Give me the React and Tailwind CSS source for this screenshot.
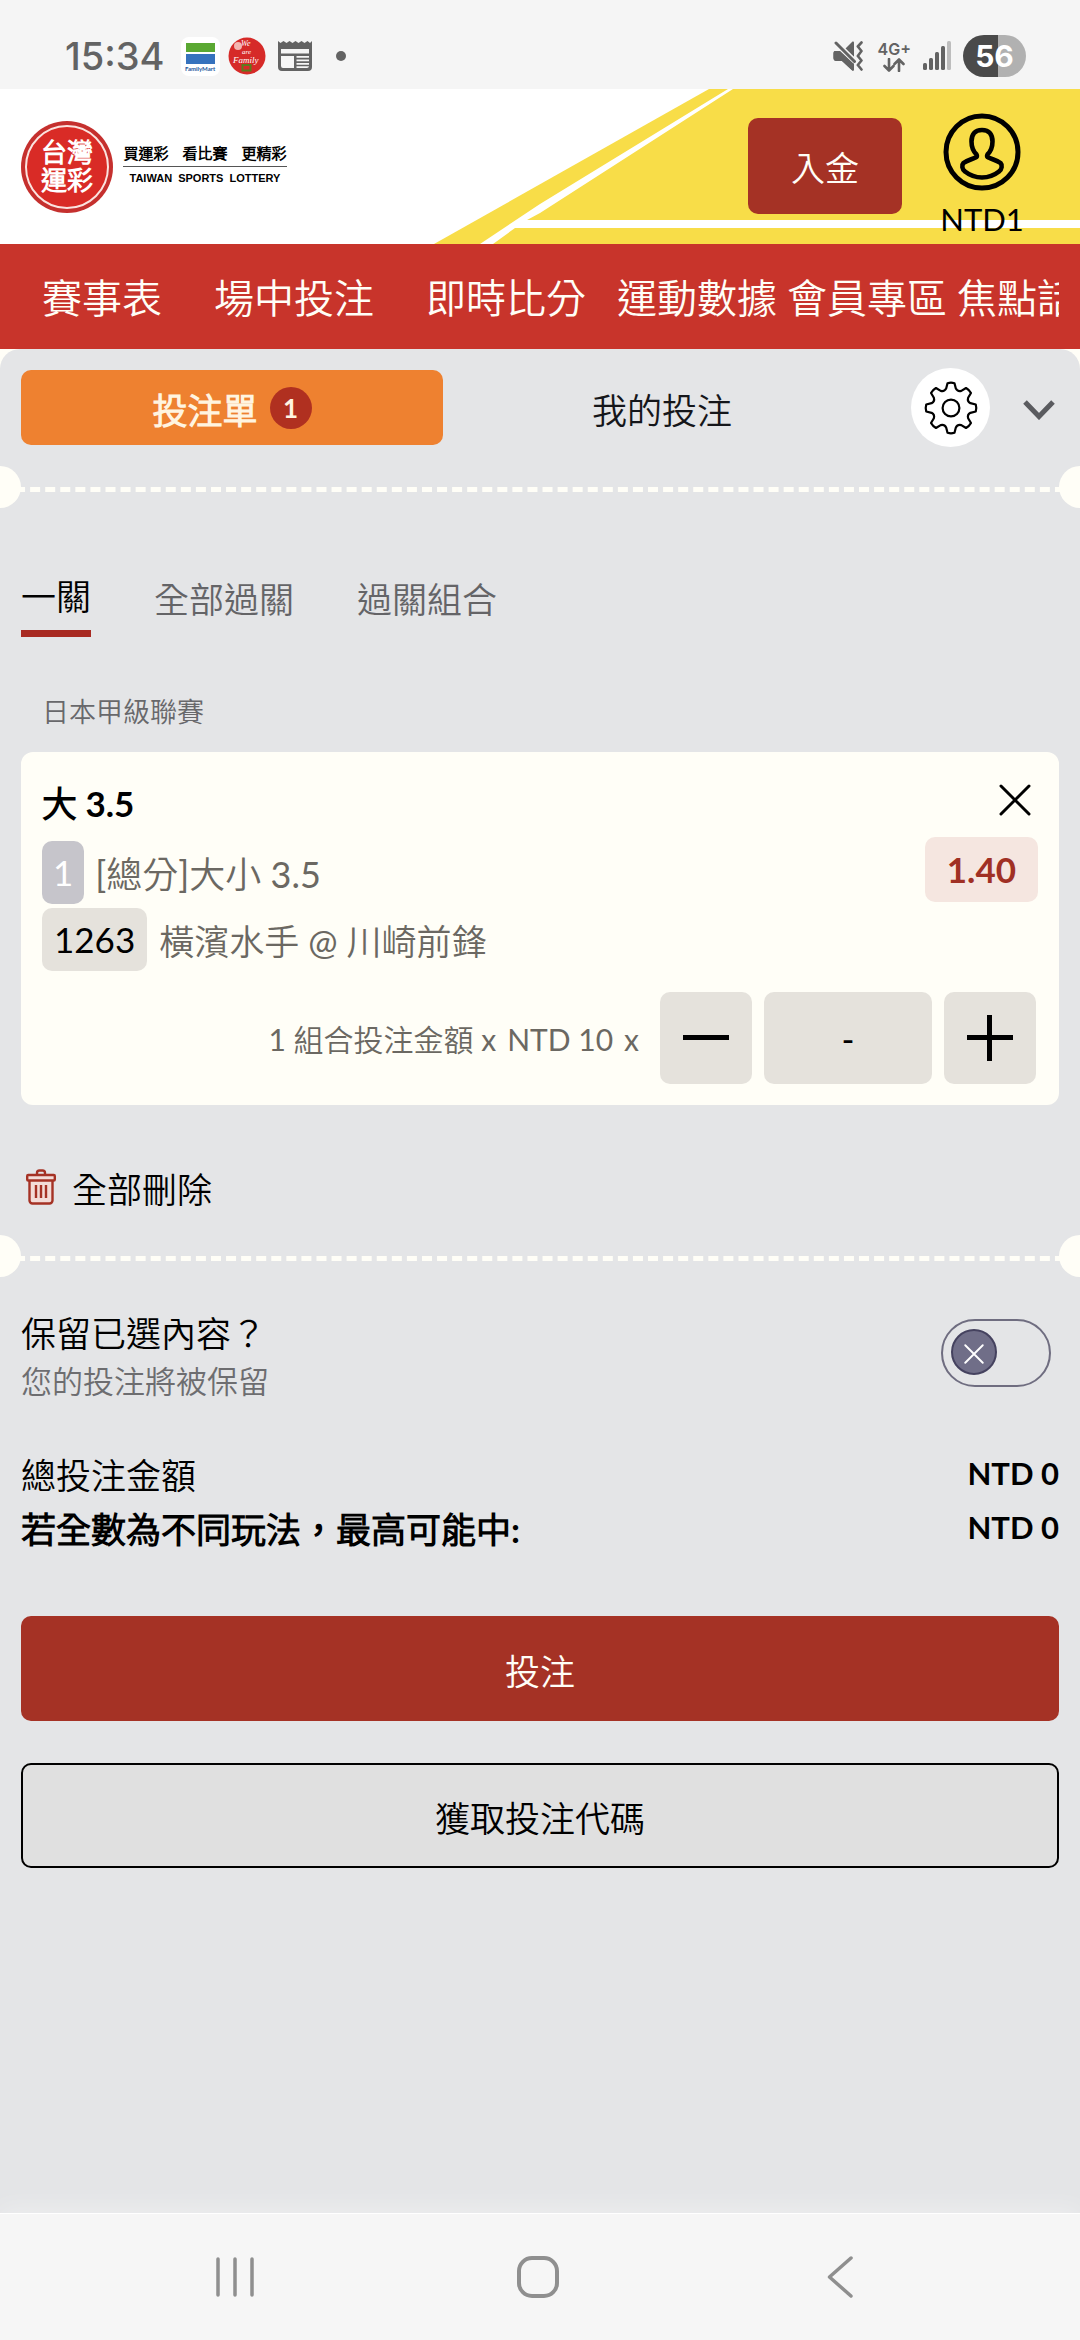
import { useState } from "react";

const NAV_ITEMS = [
  { label: "賽事表", wide: true },
  { label: "場中投注", wide: true },
  { label: "即時比分", wide: true },
  { label: "運動數據" },
  { label: "會員專區" },
  { label: "焦點話題" },
];

const BET_MODES = ["一關", "全部過關", "過關組合"];

const SIGNAL_BARS = [
  { x: 0, y: 22 },
  { x: 6, y: 17 },
  { x: 12, y: 11 },
  { x: 18, y: 5 },
  { x: 24, y: 0, weak: true },
];

// --- icons ---

// eight-tooth cog outline, centred on 28,28
function gearPath() {
  const pt = (deg, r) => {
    const a = (deg * Math.PI) / 180;
    return `${(28 + r * Math.sin(a)).toFixed(2)} ${(28 - r * Math.cos(a)).toFixed(2)}`;
  };
  let d = "";
  for (let i = 0; i < 8; i++) {
    const c = i * 45;
    d += `${i ? "L" : "M"}${pt(c - 14, 20)} L${pt(c - 8, 25)} Q${pt(c, 25.8)} ${pt(c + 8, 25)} L${pt(c + 14, 20)} `;
    d += `Q${pt(c + 22.5, 17.4)} ${pt(c + 31, 20)} `;
  }
  return d + "Z";
}

function GearIcon() {
  return (
    <svg viewBox="0 0 56 56" className="size-14" fill="none" stroke="#000" strokeWidth="2.2" strokeLinejoin="round">
      <path d={gearPath()} />
      <circle cx="28" cy="28" r="8.4" />
    </svg>
  );
}

function CrossIcon({ className }) {
  return (
    <svg viewBox="0 0 32 32" className={className} fill="none" stroke="currentColor" strokeWidth="3" strokeLinecap="round">
      <path d="M2 2 30 30M30 2 2 30" />
    </svg>
  );
}

function TrashIcon() {
  return (
    <svg viewBox="0 0 30 36" className="h-9 w-[30px]" fill="none" stroke="#a53225" strokeWidth="2.4" strokeLinejoin="round">
      <path d="M11 6V4a2.5 2.5 0 0 1 2.5-2.5h3A2.5 2.5 0 0 1 19 4v2" />
      <path d="M3.5 11v20.5a3 3 0 0 0 3 3h17a3 3 0 0 0 3-3V11" fill="#f3dcd8" />
      <rect x="1.2" y="6" width="27.6" height="5.5" rx="1" fill="#f3dcd8" />
      <path d="M10 16v13M15 16v13M20 16v13" />
    </svg>
  );
}

function ProfileIcon() {
  return (
    <svg viewBox="0 0 78 78" className="size-[78px]" fill="none" stroke="#000" strokeLinejoin="round">
      <circle cx="39" cy="39" r="36" strokeWidth="5" />
      <path
        strokeWidth="4.6"
        d="M39 17C31.5 17 28.5 22 28.5 28.5C28.5 34 30 38 33.5 41.5C34.5 43 34 44 32.5 44.5C28.5 46.5 23.5 47.5 20.5 50C18.5 52 19 56.5 22 58.5C27 62.5 33 64.5 39 64.5C45 64.5 51 62.5 56 58.5C59 56.5 59.5 52 57.5 50C54.5 47.5 49.5 46.5 45.5 44.5C44 44 43.5 43 44.5 41.5C48 38 49.5 34 49.5 28.5C49.5 22 46.5 17 39 17Z"
      />
    </svg>
  );
}

// --- phone chrome ---

function StatusBar() {
  return (
    <div className="flex h-[89px] shrink-0 items-end bg-[#f5f5f5] pr-[54px] pb-[12px] pl-[65px] text-[#636363]">
      <div className="flex h-[42px] flex-1 items-center">
        <span className="font-['Inter',sans-serif] text-[38px] leading-[42px] font-medium">15:34</span>
        <div className="ml-[16px] flex size-[39px] flex-col items-center rounded-lg bg-white pt-[6px]">
          <div className="h-[9px] w-[29px] bg-[#5aa832]" />
          <div className="mt-[2px] h-[10px] w-[29px] bg-[#3672bd]" />
          <span className="font-['Lato',sans-serif] text-[6px] leading-[10px] font-bold text-[#24569c]">FamilyMart</span>
        </div>
        <svg viewBox="0 0 38 38" className="ml-[8px] size-[38px]">
          <circle cx="19" cy="19" r="18.5" fill="#d62a28" />
          <circle cx="10" cy="9" r="4" fill="#f3b5b0" />
          <g fill="#fff" fontFamily="Liberation Serif, serif" fontStyle="italic">
            <text x="13" y="9" fontSize="8">We</text>
            <text x="14" y="17" fontSize="7">are</text>
            <text x="5" y="26" fontSize="9">Family</text>
          </g>
          <rect x="14.5" y="28" width="8" height="5.5" fill="none" stroke="#5c7a1c" strokeWidth="2" />
        </svg>
        <svg viewBox="0 0 34 30" className="ml-[12px] h-[30px] w-[34px]" fill="#636363">
          <path d="M0 0l2.500 2 3-2 3 2 3-2 3 2 3-2 3 2 3-2 3 2 3-2 2.500 2L34 0V26a4 4 0 0 1-4 4H4a4 4 0 0 1-4-4Z" />
          <path fill="#f5f5f5" d="M3 8h28v4.500H3ZM3 15h13v12H5a2 2 0 0 1-2-2ZM18.500 15H31v1.800H18.500ZM18.500 18.500H31v1.800H18.500ZM18.500 22H31v1.800H18.500ZM18.500 25.300H31a2 2 0 0 1-2 1.700H18.500Z" />
        </svg>
        <span className="ml-[24px] size-[10px] rounded-full bg-[#636363]" />
      </div>

      <div className="flex h-[42px] items-center">
        <svg viewBox="0 0 30 30" className="size-[30px]">
          <path d="M2 10h5l14 13v5.500c0 1-1 1.500-2 .8L9 20H3.500C1.500 20 .5 19 .5 17v-4.500C.5 11 1 10 2 10Z" fill="#636363" />
          <path d="M12 8l7-7c1-.8 2-.3 2 1v14Z" fill="#636363" />
          <path d="M3 2l18.500 18.500" stroke="#f5f5f5" strokeWidth="6" />
          <path d="M2 10h5l14 13v5.500c0 1-1 1.500-2 .8L9 20H3.500C1.500 20 .5 19 .5 17v-4.500C.5 11 1 10 2 10Z" fill="#636363" />
          <path d="M3 2l18.500 18.500" stroke="#636363" strokeWidth="3" strokeLinecap="round" />
          <path
            d="M28.500 1.500 24.800 5.500 28.500 10 24.800 15 28.500 19.500 24.800 24 28.500 28.500"
            fill="none"
            stroke="#636363"
            strokeWidth="2.600"
            strokeLinecap="round"
            strokeLinejoin="round"
          />
        </svg>
        <div className="ml-[15px] flex flex-col items-center">
          <span className="font-['Inter',sans-serif] text-[16px] leading-[17px] font-semibold">4G+</span>
          <svg viewBox="0 0 22 14" className="h-[14px] w-[22px]" fill="none" stroke="#636363" strokeWidth="2.6" strokeLinecap="round" strokeLinejoin="round">
            <path d="M6 1v11M1.500 8 6 12.500 10.500 8M16 13V2M11.500 6 16 1.500 20.500 6" />
          </svg>
        </div>
        <svg viewBox="0 0 28 30" className="ml-[12px] h-[30px] w-[28px]">
          {SIGNAL_BARS.map((bar) => (
            <rect key={bar.x} x={bar.x} y={bar.y} width="4" height={29 - bar.y} rx="1.5" fill={bar.weak ? "#bdbdbd" : "#636363"} />
          ))}
        </svg>
        <div className="ml-[12px] flex h-[42px] w-[63px] items-center justify-center rounded-full bg-linear-to-r from-[#4a4a4a] from-56% to-[#b1b1b1] to-56% font-['Inter',sans-serif] text-[30px] leading-[42px] font-bold text-white">
          56
        </div>
      </div>
    </div>
  );
}

function SystemNav() {
  const keyStyle = "flex size-[42px] items-center justify-center";
  return (
    <div className="flex h-[127px] shrink-0 items-center justify-between border-t border-white bg-[#f6f6f6] pr-[219px] pb-[1px] pl-[214px] shadow-[0_-4px_24px_rgba(255,255,255,0.35)]">
      <button type="button" aria-label="最近使用" className={keyStyle}>
        <svg viewBox="0 0 38 42" className="h-[42px] w-[38px]" stroke="#8f8f8f" strokeWidth="3.5" strokeLinecap="round">
          <path d="M2 3v36M19 3v36M36 3v36" />
        </svg>
      </button>
      <button type="button" aria-label="主畫面" className={keyStyle}>
        <svg viewBox="0 0 42 42" className="size-[42px]" fill="none" stroke="#8f8f8f" strokeWidth="4">
          <rect x="2" y="2" width="38" height="38" rx="13" />
        </svg>
      </button>
      <button type="button" aria-label="返回" className={keyStyle}>
        <svg viewBox="0 0 26 42" className="h-[42px] w-[26px]" fill="none" stroke="#8f8f8f" strokeWidth="3.5" strokeLinecap="round" strokeLinejoin="round">
          <path d="M24 2 2.500 21 24 40" />
        </svg>
      </button>
    </div>
  );
}

// --- site header ---

function Header() {
  return (
    <header className="relative flex h-[155px] shrink-0 items-start bg-white pr-[52px] pl-[21px]">
      <svg viewBox="0 0 1080 155" preserveAspectRatio="xMaxYMid slice" className="absolute inset-0 size-full">
        <path fill="#f8dd48" d="M709 0H1080V155H434Z" />
        <path fill="#fff" d="M728 0H733L540 124L527 131H1080V139H515L493 155H480L540 115Z" />
      </svg>

      <a href="#home" className="relative mt-[32px] flex flex-1 items-center">
        <span className="flex size-[92px] items-center justify-center rounded-full bg-[#c5302e] p-[4px]">
          <span className="flex size-full flex-col items-center justify-center rounded-full border-2 border-[#fbe3df] bg-[#d92b26] pb-[2px] text-[26px] leading-[28px] font-bold text-white">
            <span>台灣</span>
            <span>運彩</span>
          </span>
        </span>
        <span className="ml-[10px] flex w-[164px] flex-col items-center pb-[6px] text-black">
          <span className="flex w-full justify-center gap-[14px] border-b border-[#555] pb-[4px] text-[15px] leading-[18px] font-bold">
            <span>買運彩</span>
            <span>看比賽</span>
            <span>更精彩</span>
          </span>
          <span className="pt-[4px] font-['Liberation_Sans',sans-serif] text-[11px] leading-[14px] font-bold whitespace-nowrap">
            TAIWAN&nbsp; SPORTS&nbsp; LOTTERY
          </span>
        </span>
      </a>

      <button type="button" className="relative mt-[29px] h-24 w-[154px] rounded-[10px] bg-[#a53225] pt-1 text-[34px] leading-[42px] text-[#fffef7]">
        入金
      </button>
      <a href="#account" className="relative mt-[24px] ml-[34px] flex w-[92px] flex-col items-center text-black">
        <ProfileIcon />
        <span className="mt-[8px] text-[31px] leading-[40px]">NTD1</span>
      </a>
    </header>
  );
}

function MainNav() {
  return (
    <nav className="h-[105px] shrink-0 bg-[#c8342b] px-[21px]">
      <ul className="flex h-full items-center gap-[10px] overflow-hidden pt-[3px] text-[40px] leading-[60px] whitespace-nowrap text-[#fffef7]">
        {NAV_ITEMS.map((item) => (
          <li key={item.label} className={item.wide ? "shrink-0 px-[21px]" : "shrink-0"}>
            <a href={`#${item.label}`}>{item.label}</a>
          </li>
        ))}
      </ul>
    </nav>
  );
}

// --- bet slip ---

function TicketDivider() {
  return (
    <div className="relative h-[42px] overflow-hidden pt-[21px]">
      <div className="border-t-[5px] border-dashed border-[#fffef7]" />
      <span className="absolute top-0 -left-[21px] size-[42px] rounded-full bg-[#fffef7]" />
      <span className="absolute top-0 -right-[21px] size-[42px] rounded-full bg-[#fffef7]" />
    </div>
  );
}

function BetCard() {
  const [stake, setStake] = useState(0);
  const boxStyle = "flex h-[92px] w-[92px] items-center justify-center rounded-[10px] bg-[#e5e2dc] text-black";

  return (
    <article className="mx-[21px] mt-5 rounded-xl bg-[#fffef7] px-[21px] pt-[28px] pb-[21px]">
      <div className="flex justify-between">
        <div>
          <h3 className="text-[35px] leading-[46px] font-bold text-black">大 3.5</h3>
          <div className="mt-[15px] flex items-center text-[#6b6862]">
            <span className="rounded-[10px] bg-[#c6c5cb] px-[11px] text-[35px] leading-[63px] text-white">1</span>
            <span className="ml-[11px] pt-0.5 text-[36px] leading-[42px]">[總分]大小 3.5</span>
          </div>
          <div className="mt-1 flex items-center text-[#6b6862]">
            <span className="rounded-[10px] bg-[#e5e2dc] px-[12px] text-[35px] leading-[63px] text-black">1263</span>
            <span className="ml-[12px] pt-0.5 text-[35px] leading-[42px]">橫濱水手 @ 川崎前鋒</span>
          </div>
        </div>
        <div className="flex flex-col items-end pt-1">
          <button type="button" aria-label="移除" className="mr-[7px] text-black">
            <CrossIcon className="size-8" />
          </button>
          <span className="mt-[21px] rounded-[10px] bg-[#f5e6e0] px-[22px] text-[35px] leading-[65px] font-bold text-[#a03024]">
            1.40
          </span>
        </div>
      </div>

      <div className="mt-[21px] flex items-center justify-end gap-3 pr-[2px]">
        <label htmlFor="stake" className="mr-[9px] flex gap-[11px] pt-0.5 text-[30px] leading-[40px] text-[#6b6862]">
          <span>1 組合投注金額 x</span>
          <span>NTD 10</span>
          <span>x</span>
        </label>
        <button type="button" aria-label="減少" onClick={() => setStake(Math.max(0, stake - 1))} className={boxStyle}>
          <svg viewBox="0 0 46 46" className="size-[46px]" stroke="currentColor" strokeWidth="5">
            <path d="M0 22.500h46" />
          </svg>
        </button>
        <input
          id="stake"
          type="text"
          readOnly
          value={stake || "-"}
          className="h-[92px] w-[168px] rounded-[10px] bg-[#e5e2dc] text-center text-[35px] text-black"
        />
        <button type="button" aria-label="增加" onClick={() => setStake(stake + 1)} className={boxStyle}>
          <svg viewBox="0 0 46 46" className="size-[46px]" stroke="currentColor" strokeWidth="5">
            <path d="M0 22.500h46M22.500 0v46" />
          </svg>
        </button>
      </div>
    </article>
  );
}

function KeepToggle() {
  const [keep, setKeep] = useState(false);
  return (
    <div className="mt-[35px] flex items-start justify-between px-[21px]">
      <label htmlFor="keep" className="block">
        <span className="block text-[35px] leading-[42px] text-black">保留已選內容？</span>
        <span className="mt-2 block text-[31px] leading-[38px] text-[#6d6d70]">您的投注將被保留</span>
      </label>
      <label className={`mt-[7px] mr-2 flex h-[68px] w-[110px] cursor-pointer items-start rounded-full border-2 border-[#6f6d80] px-2 pt-2 ${keep ? "justify-end" : "justify-start"}`}>
        <input id="keep" type="checkbox" checked={keep} onChange={(e) => setKeep(e.target.checked)} className="sr-only" />
        <span className="flex size-[46px] items-center justify-center rounded-full border-2 border-[#45425f] bg-[#706e88] pt-[3px] text-white">
          <CrossIcon className="size-5" />
        </span>
      </label>
    </div>
  );
}

function BetSlip() {
  const [mode, setMode] = useState(BET_MODES[0]);

  return (
    <main className="flex flex-1 flex-col bg-[#fffef7]">
      <div className="flex flex-1 flex-col rounded-t-[20px] bg-[#e4e5e7] pt-[19px]">
        <div className="flex items-center pr-[25px] pl-[21px]">
          <button type="button" className="flex h-[75px] flex-1 items-center justify-center gap-[12px] rounded-[10px] bg-[#ee8130] text-[#fff4e0]">
            <span className="pt-1 text-[35px] leading-[42px] font-bold">投注單</span>
            <span className="size-[42px] rounded-full bg-[#b03020] text-center text-[26px] leading-[42px] font-bold text-[#fff4e0]">1</span>
          </button>
          <button type="button" className="ml-2 h-[75px] flex-1 pt-1 text-[35px] leading-[42px] text-[#15161a]">
            我的投注
          </button>
          <button type="button" aria-label="設定" className="ml-[38px] flex size-[79px] items-center justify-center rounded-full bg-white">
            <GearIcon />
          </button>
          <button type="button" aria-label="收合" className="ml-[33px] pt-1">
            <svg viewBox="0 0 32 20" className="h-5 w-8" fill="none" stroke="#5a5b5f" strokeWidth="5">
              <path d="M2 2 16 16.500 30 2" />
            </svg>
          </button>
        </div>

        <div className="mt-[19px]">
          <TicketDivider />
        </div>

        <div className="mt-[53px] flex gap-[63px] px-[21px]">
          {BET_MODES.map((name) => (
            <button
              key={name}
              type="button"
              onClick={() => setMode(name)}
              className={`h-[76px] text-[35px] leading-[42px] ${mode === name ? "border-b-[7px] border-[#a82a22] text-black" : "text-[#646467]"}`}
            >
              {name}
            </button>
          ))}
        </div>

        <h2 className="mt-[55px] px-[42px] text-[27px] leading-[40px] text-[#68686b]">日本甲級聯賽</h2>
        <BetCard />

        <button type="button" className="mt-[59px] flex items-center gap-4 self-start px-[26px] text-[35px] leading-[42px] text-black">
          <TrashIcon />
          <span className="pt-1">全部刪除</span>
        </button>

        <div className="mt-[25px]">
          <TicketDivider />
        </div>

        <KeepToggle />

        <dl className="mt-[48px] px-[21px] text-[35px] leading-[54px] text-black">
          <div className="flex justify-between">
            <dt>總投注金額</dt>
            <dd className="text-[31px] leading-[50px] font-bold">NTD 0</dd>
          </div>
          <div className="flex justify-between font-bold">
            <dt>若全數為不同玩法，最高可能中:</dt>
            <dd className="text-[31px] leading-[50px]">NTD 0</dd>
          </div>
        </dl>

        <div className="mt-[60px] flex flex-col gap-[42px] px-[21px] pb-[42px]">
          <button type="button" className="h-[105px] rounded-[10px] bg-[#a53225] pt-1 text-[35px] leading-[42px] text-[#fffef7]">
            投注
          </button>
          <button type="button" className="h-[105px] rounded-[10px] border-2 border-black bg-[#e0e0e0] pt-1 text-[35px] leading-[42px] text-black">
            獲取投注代碼
          </button>
        </div>
      </div>
    </main>
  );
}

export default function App() {
  return (
    <div lang="zh-Hant" className="flex min-h-screen flex-col overflow-x-hidden bg-[#e4e5e7] font-['Lato','Noto_Sans_CJK_TC_DemiLight','Noto_Sans_CJK_TC',sans-serif]">
      <StatusBar />
      <Header />
      <MainNav />
      <BetSlip />
      <SystemNav />
    </div>
  );
}
